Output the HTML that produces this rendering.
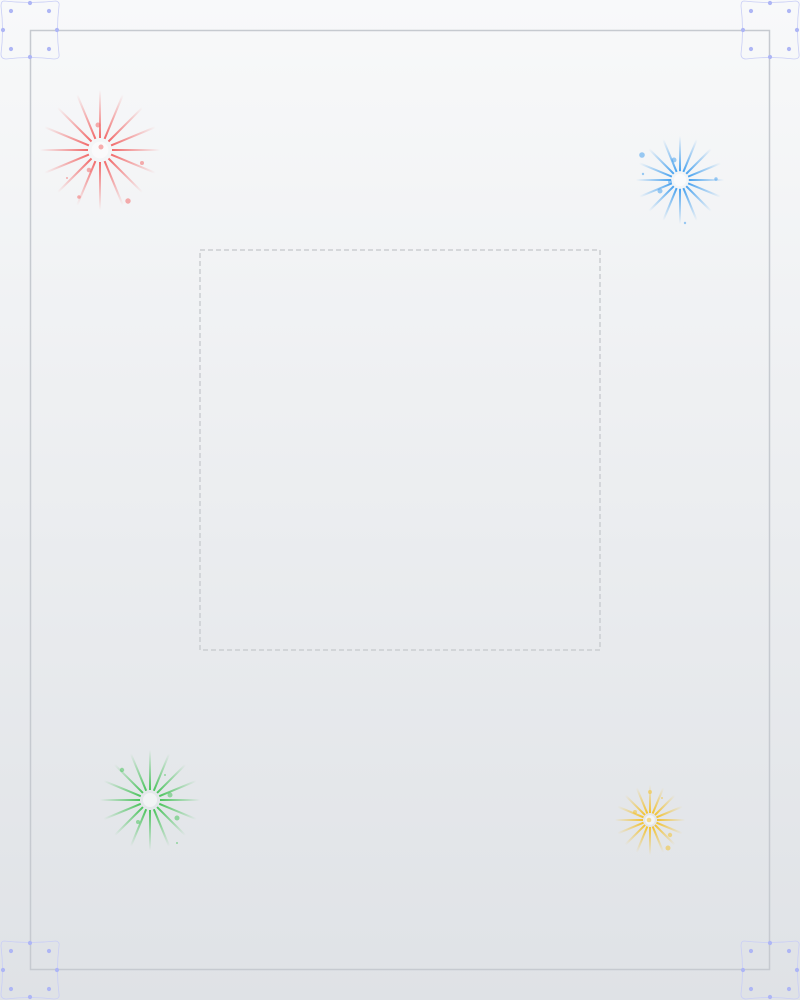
<!DOCTYPE html>
<html><head><meta charset="utf-8"><style>
html,body{margin:0;padding:0}
body{width:800px;height:1000px;overflow:hidden;background:linear-gradient(#f8f9fa,#dfe2e6);position:relative}
svg{position:absolute;left:0;top:0}
</style></head><body>
<svg id="s" width="800" height="1000" viewBox="0 0 800 1000" xmlns="http://www.w3.org/2000/svg">
<rect x="30.5" y="30.5" width="739" height="939" fill="none" stroke="#c6cad0" stroke-width="1.5"/>
<rect x="200" y="250" width="400" height="400" fill="none" stroke="#cbced2" stroke-width="1.5" stroke-dasharray="5,3"/>
</svg>
<script>
var s=document.getElementById('s'),h='';
var defs='';
function burst(id,cx,cy,R,col,dots){
 defs+='<radialGradient id="'+id+'" gradientUnits="userSpaceOnUse" cx="'+cx+'" cy="'+cy+'" r="'+R+'"><stop offset="0.2" stop-color="'+col+'" stop-opacity="1"/><stop offset="1" stop-color="'+col+'" stop-opacity="0"/></radialGradient>';
 var r0=R*0.2;
 for(var i=0;i<16;i++){var a=i*Math.PI/8;
  h+='<line x1="'+(cx+r0*Math.cos(a))+'" y1="'+(cy+r0*Math.sin(a))+'" x2="'+(cx+R*Math.cos(a))+'" y2="'+(cy+R*Math.sin(a))+'" stroke="url(#'+id+')" stroke-width="2"/>';}
 h+='<circle cx="'+cx+'" cy="'+cy+'" r="'+(r0*0.7)+'" fill="#fff" opacity="0.5"/>';
 dots.forEach(function(d){h+='<circle cx="'+(cx+d[0])+'" cy="'+(cy+d[1])+'" r="'+d[2]+'" fill="'+col+'" opacity="0.55"/>';});
}
burst('gr',100,150,60,'#f26b6b',[[-2,-25,2.5],[1,-3,2.5],[42,13,2],[28,51,2.7],[-21,47,1.8],[-11,20,2.3],[-33,28,1]]);
burst('gb',680,180,44,'#4aa3ef',[[-38,-25,2.8],[-6,-20,2.5],[-20,11,2.5],[36,-1,1.7],[5,43,1.2],[-37,-6,1.2],[-10,2,2]]);
burst('gg',150,800,50,'#4cc45e',[[-28,-30,2.2],[20,-5,2.5],[27,18,2.5],[-12,22,2],[27,43,1],[15,-25,1]]);
burst('gy',650,820,35,'#f2c233',[[0,-28,2],[-15,-8,2],[20,15,2.2],[18,28,2.5],[12,-22,1],[-1,0,2.3]]);
function corner(x,y){
 h+='<path d="M'+(x+4)+' '+(y+1)+' Q'+(x+30)+' '+(y+4)+' '+(x+56)+' '+(y+1)+' Q'+(x+60)+' '+(y+2)+' '+(x+59)+' '+(y+6)+' Q'+(x+56)+' '+(y+30)+' '+(x+59)+' '+(y+54)+' Q'+(x+60)+' '+(y+59)+' '+(x+54)+' '+(y+59)+' Q'+(x+30)+' '+(y+56)+' '+(x+6)+' '+(y+59)+' Q'+(x+1)+' '+(y+59)+' '+(x+1)+' '+(y+54)+' Q'+(x+4)+' '+(y+30)+' '+(x+1)+' '+(y+6)+' Q'+(x+1)+' '+(y+1)+' '+(x+4)+' '+(y+1)+'Z" fill="none" stroke="#c9cef6" stroke-width="0.8"/>';
 [[30,3],[49,11],[57,30],[49,49],[30,57],[11,49],[3,30],[11,11]].forEach(function(p){h+='<circle cx="'+(x+p[0])+'" cy="'+(y+p[1])+'" r="2.1" fill="#aeb6f5"/>';});
}
corner(0,0);corner(740,0);corner(0,940);corner(740,940);
s.insertAdjacentHTML('beforeend','<defs>'+defs+'</defs>'+h);
</script>
</body></html>
